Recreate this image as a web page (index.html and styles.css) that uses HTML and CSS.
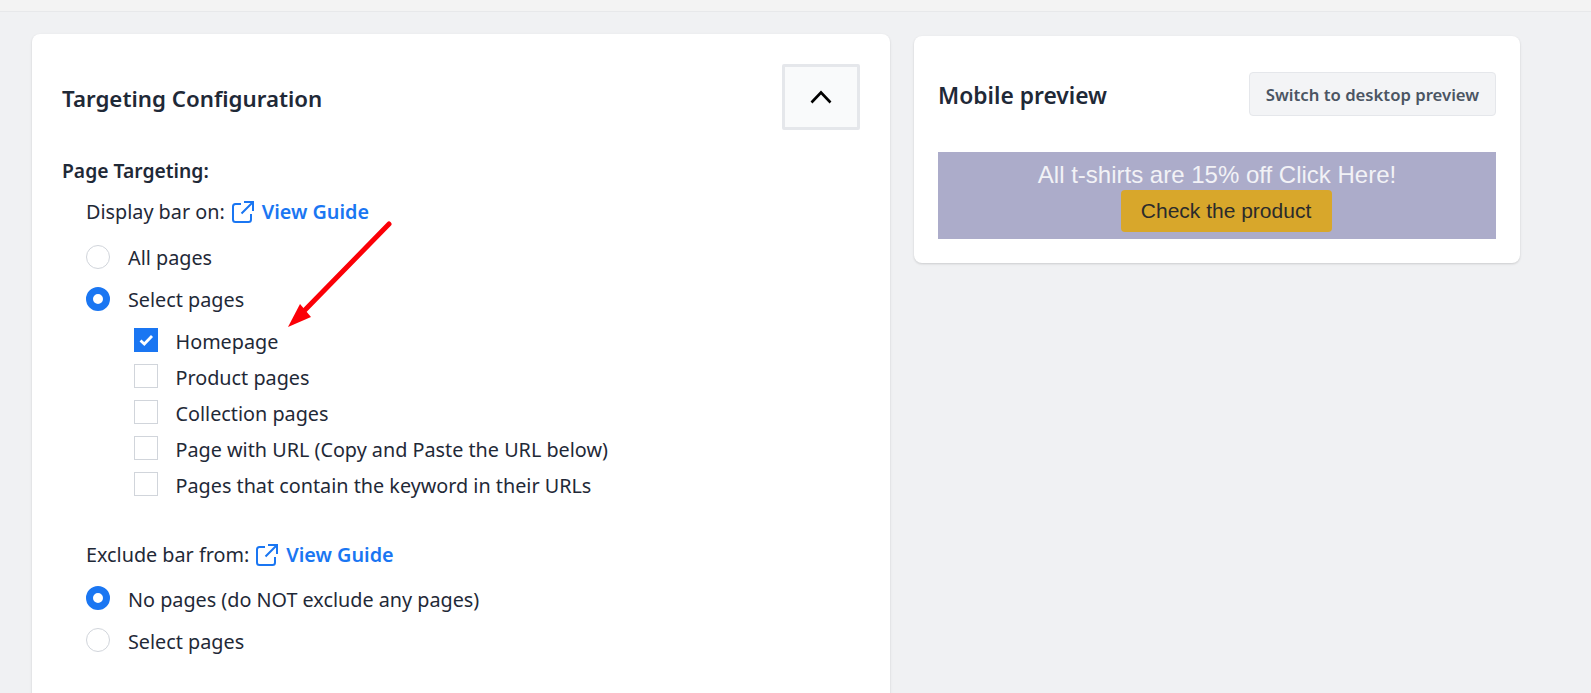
FILE: index.html
```html
<!DOCTYPE html>
<html lang="en">
<head>
<meta charset="utf-8">
<title>Targeting Configuration</title>
<link rel="stylesheet" href="styles.css">
</head>
<body>
<div class="topbar"></div>
<main class="main">
  <section class="card config">
    <header class="config-head">
      <h2 class="title">Targeting Configuration</h2>
      <button class="collapse" type="button" aria-label="Collapse">
        <svg width="24" height="16" viewBox="0 0 24 16"><path d="M2.5 13.5 L12 3.5 L21.5 13.5" fill="none" stroke="#000" stroke-width="2.6"/></svg>
      </button>
    </header>
    <div class="section-label">Page Targeting:</div>
    <div class="group">
      <div class="group-label">Display bar on:
        <a class="guide" href="#"><svg class="ext" width="24" height="24" viewBox="0 0 24 24"><path d="M10 4H4.5A2.5 2.5 0 0 0 2 6.500V19.500A2.500 2.500 0 0 0 4.500 22H17.500A2.500 2.500 0 0 0 20 19.500V14M13 2H22V11M22 2L10.500 13.500" fill="none" stroke="#1a76f2" stroke-width="2"/></svg>View Guide</a>
      </div>
      <div class="radios">
        <div class="radio-row"><span class="radio"></span>All pages</div>
        <div class="radio-row"><span class="radio on"></span>Select pages</div>
      </div>
      <div class="checks">
        <div class="check-row"><span class="check on"><svg width="18" height="18" viewBox="0 0 18 18"><path d="M3.500 9.500L7.300 13L15 5" fill="none" stroke="#fff" stroke-width="2.800"/></svg></span>Homepage</div>
        <div class="check-row"><span class="check"></span>Product pages</div>
        <div class="check-row"><span class="check"></span>Collection pages</div>
        <div class="check-row"><span class="check"></span>Page with URL (Copy and Paste the URL below)</div>
        <div class="check-row"><span class="check"></span>Pages that contain the keyword in their URLs</div>
      </div>
    </div>
    <div class="group exclude">
      <div class="group-label">Exclude bar from:
        <a class="guide" href="#"><svg class="ext" width="24" height="24" viewBox="0 0 24 24"><path d="M10 4H4.5A2.5 2.5 0 0 0 2 6.500V19.500A2.500 2.500 0 0 0 4.500 22H17.500A2.500 2.500 0 0 0 20 19.500V14M13 2H22V11M22 2L10.500 13.500" fill="none" stroke="#1a76f2" stroke-width="2"/></svg>View Guide</a>
      </div>
      <div class="radios">
        <div class="radio-row"><span class="radio on"></span>No pages (do NOT exclude any pages)</div>
        <div class="radio-row"><span class="radio"></span>Select pages</div>
      </div>
    </div>
  </section>
  <aside class="card preview">
    <header class="preview-head">
      <h2 class="title preview-title">Mobile preview</h2>
      <button class="switch" type="button">Switch to desktop preview</button>
    </header>
    <div class="banner">
      <div class="banner-text">All t-shirts are 15% off Click Here!</div>
      <span class="banner-btn">Check the product</span>
    </div>
  </aside>
</main>
<svg class="arrow" width="1591" height="693" viewBox="0 0 1591 693" aria-hidden="true">
  <path d="M389 224L303 312" stroke="#fb0007" stroke-width="5" stroke-linecap="round" fill="none"/>
  <path d="M288 327L300 304L311 317Z" fill="#fb0007"/>
</svg>
</body>
</html>
```
FILE: styles.css
```css
* { box-sizing: border-box; }
html, body { margin: 0; height: 693px; overflow: hidden; }
body {
  position: relative;
  background: #f0f1f3;
  color: #1f2937;
  font-family: "Noto Sans", "Open Sans", sans-serif;
  font-size: 19.8px;
  line-height: 24px;
}
.topbar { height: 12px; background: #f3f3f3; border-bottom: 1px solid #e7e8ea; }
.main { display: flex; align-items: flex-start; gap: 24px; padding: 22px 0 0 32px; }
.card {
  background: #fff;
  border-radius: 8px;
  box-shadow: 0 1px 3px rgba(0, 0, 0, .1), 0 1px 2px rgba(0, 0, 0, .06);
}
.config { width: 858px; height: 693px; margin-bottom: -60px; padding: 30px 30px 0; }
.config-head { display: flex; align-items: center; justify-content: space-between; height: 66px; }
.title { margin: 0; padding-top: 4px; font-size: 22.3px; line-height: 30px; font-weight: 600; }
.preview-title { font-size: 22.8px; }
.collapse {
  display: flex; align-items: center; justify-content: center;
  width: 78px; height: 66px; padding: 0;
  background: #f9fafb; border: 3px solid #e5e7eb; border-radius: 2px;
}
.section-label { margin-top: 29px; font-size: 19.3px; font-weight: 600; }
.group { padding-left: 24px; }
.group-label { display: flex; align-items: center; gap: 6px; margin-top: 17px; height: 24px; line-height: 26px; }
.guide { display: inline-flex; align-items: center; gap: 7px; color: #1a76f2; font-weight: 600; text-decoration: none; }
.radios { display: flex; flex-direction: column; gap: 18px; margin-top: 21px; }
.radio-row { display: flex; align-items: flex-start; gap: 18px; height: 24px; line-height: 26px; }
.radio { width: 24px; height: 24px; border-radius: 50%; border: 1px solid #d1d5db; background: #fff; flex: none; }
.radio.on { border: 7.500px solid #1a76f2; }
.checks { display: flex; flex-direction: column; gap: 12px; margin-top: 17px; padding-left: 48px; }
.check-row { display: flex; align-items: flex-start; gap: 17.500px; height: 24px; line-height: 28px; }
.check { display: flex; align-items: center; justify-content: center; width: 24px; height: 24px; border: 1px solid #d1d5db; background: #fff; flex: none; }
.check.on { background: #1a76f2; border-color: #1a76f2; }
.exclude .group-label { margin-top: 47px; }
.exclude .radios { margin-top: 19px; }
.exclude .radio-row { line-height: 28px; }
.preview { width: 606px; height: 227px; margin-top: 2px; padding: 36px 24px 0; }
.preview-head { display: flex; align-items: center; justify-content: space-between; height: 44px; }
.switch {
  width: 247px; height: 44px; padding: 1px 0 0;
  background: #f3f4f6; border: 1px solid #e5e7eb; border-radius: 4px;
  color: #4b5563; font: 600 16.7px/24px "Noto Sans", "Open Sans", sans-serif;
}
.banner {
  display: flex; flex-direction: column; align-items: center;
  height: 87px; margin-top: 36px; padding-top: 10px;
  background: #acacca;
  font-family: "Liberation Sans", Arial, sans-serif;
}
.banner-text { height: 28px; font-size: 24px; line-height: 26px; color: #f2f2f6; }
.banner-btn {
  display: flex; align-items: center; justify-content: center;
  width: 211px; height: 42px; margin-left: 18px;
  background: #d8a72b; border-radius: 4px; color: #2b2b2b; font-size: 21px;
}
.arrow { position: absolute; left: 0; top: 0; pointer-events: none; }
```
